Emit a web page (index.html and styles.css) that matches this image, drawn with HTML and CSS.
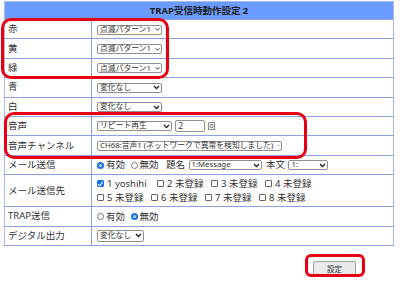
FILE: index.html
```html
<!DOCTYPE html>
<html lang="ja">
<head>
    <meta charset="UTF-8">
    <meta name="viewport" content="width=device-width, initial-scale=1.0">
    <title>TRAP受信時動作設定</title>
    <link rel="stylesheet" href="styles.css">
</head>
<body>
<div class="page">
    <table class="settings">
        <tr><th colspan="2">TRAP受信時動作設定 2</th></tr>
        <tr>
            <td class="label">赤</td>
            <td><span class="select w-65">点滅パターン1<svg width="7" height="5" viewBox="0 0 7 5"><path d="M1 1l2.5 2.5L6 1" /></svg></span></td>
        </tr>
        <tr>
            <td class="label">黄</td>
            <td><span class="select w-65">点滅パターン1<svg width="7" height="5" viewBox="0 0 7 5"><path d="M1 1l2.5 2.5L6 1" /></svg></span></td>
        </tr>
        <tr>
            <td class="label">緑</td>
            <td><span class="select w-65">点滅パターン1<svg width="7" height="5" viewBox="0 0 7 5"><path d="M1 1l2.5 2.5L6 1" /></svg></span></td>
        </tr>
        <tr>
            <td class="label">青</td>
            <td><span class="select w-65">変化なし<svg width="7" height="5" viewBox="0 0 7 5"><path d="M1 1l2.5 2.5L6 1" /></svg></span></td>
        </tr>
        <tr>
            <td class="label">白</td>
            <td><span class="select w-65">変化なし<svg width="7" height="5" viewBox="0 0 7 5"><path d="M1 1l2.5 2.5L6 1" /></svg></span></td>
        </tr>
        <tr>
            <td class="label">音声</td>
            <td>
                <span class="select w-75">リピート再生<svg width="7" height="5" viewBox="0 0 7 5"><path d="M1 1l2.5 2.5L6 1" /></svg></span>
                <span class="input">2</span><span class="unit">回</span>
            </td>
        </tr>
        <tr>
            <td class="label">音声チャンネル</td>
            <td><span class="select w-185">CH68:音声1 (ネットワークで異常を検知しました)<svg width="7" height="5" viewBox="0 0 7 5"><path d="M1 1l2.5 2.5L6 1" /></svg></span></td>
        </tr>
        <tr>
            <td class="label">メール送信</td>
            <td>
                <span class="opt"><span class="radio on"></span>有効</span>
                <span class="opt"><span class="radio"></span>無効</span>
                <span class="word">題名</span>
                <span class="select w-73">1:Message<svg width="7" height="5" viewBox="0 0 7 5"><path d="M1 1l2.5 2.5L6 1" /></svg></span>
                <span class="word">本文</span>
                <span class="select w-40">1:<svg width="7" height="5" viewBox="0 0 7 5"><path d="M1 1l2.5 2.5L6 1" /></svg></span>
            </td>
        </tr>
        <tr class="tall">
            <td class="label">メール送信先</td>
            <td>
                <div class="checks">
                    <span class="check-item first"><span class="check on"></span>1 yoshihi</span>
                    <span class="check-item"><span class="check"></span>2 未登録</span>
                    <span class="check-item"><span class="check"></span>3 未登録</span>
                    <span class="check-item"><span class="check"></span>4 未登録</span>
                </div>
                <div class="checks">
                    <span class="check-item"><span class="check"></span>5 未登録</span>
                    <span class="check-item"><span class="check"></span>6 未登録</span>
                    <span class="check-item"><span class="check"></span>7 未登録</span>
                    <span class="check-item"><span class="check"></span>8 未登録</span>
                </div>
            </td>
        </tr>
        <tr>
            <td class="label">TRAP送信</td>
            <td>
                <span class="opt"><span class="radio"></span>有効</span>
                <span class="opt"><span class="radio on"></span>無効</span>
            </td>
        </tr>
        <tr>
            <td class="label">デジタル出力</td>
            <td><span class="select">変化なし<svg width="7" height="5" viewBox="0 0 7 5"><path d="M1 1l2.5 2.5L6 1" /></svg></span></td>
        </tr>
    </table>
    <div class="actions">
        <button class="submit">設定</button>
    </div>
    <div class="mark mark-led"></div>
    <div class="mark mark-voice"></div>
    <div class="mark mark-submit"></div>
</div>
</body>
</html>
```

FILE: styles.css
```css
body {
    margin: 0;
    background-color: #ffffff;
    font-family: "Noto Sans", "Noto Sans CJK JP", sans-serif;
    color: #333333;
}
.page {
    position: relative;
    width: 400px;
    height: 282px;
    padding-top: 1px;
    box-sizing: border-box;
}
.settings {
    margin-left: 4px;
    width: 390px;
    border-collapse: collapse;
    border: 1px solid #a9b9ec;
    font-size: 9.5px;
}
.settings th {
    height: 17px;
    padding: 0;
    background-color: #6a9bff;
    color: #222222;
    font-weight: bold;
    font-size: 9.5px;
    line-height: 12px;
    border-bottom: 1px solid #8aa0e2;
}
.settings td {
    height: 18.4px;
    padding: 0 0 0 5px;
    border-top: 1px solid #8aa0e2;
    border-bottom: 1px solid #8aa0e2;
    line-height: 12px;
    white-space: nowrap;
}
.settings td.label {
    width: 83px;
    padding-left: 3px;
    border-right: 1px solid #8aa0e2;
}
.settings tr.tall td {
    height: 31px;
}
.select {
    display: inline-flex;
    align-items: center;
    justify-content: space-between;
    gap: 4px;
    height: 10px;
    padding: 0 1px 0 2px;
    border: 1px solid #8f8f8f;
    border-radius: 2px;
    background-color: #ffffff;
    font-size: 7.8px;
    line-height: 1;
    color: #333333;
    vertical-align: middle;
}
.select svg path {
    fill: none;
    stroke: #222222;
    stroke-width: 1.3;
}
.w-65 { width: 65px; box-sizing: border-box; }
.w-75 { width: 75px; box-sizing: border-box; }
.w-73 { width: 73px; box-sizing: border-box; }
.w-40 { width: 40px; box-sizing: border-box; }
.w-185 { width: 185px; box-sizing: border-box; }
.input {
    display: inline-flex;
    align-items: center;
    box-sizing: border-box;
    width: 30px;
    height: 12px;
    margin-left: 1px;
    padding-left: 2px;
    border: 1px solid #8f8f8f;
    border-radius: 2px;
    font-size: 8px;
    vertical-align: middle;
}
.unit {
    margin-left: 2px;
    font-size: 8px;
    vertical-align: middle;
}
.opt {
    display: inline-flex;
    align-items: center;
    margin-right: 3px;
    vertical-align: middle;
}
.word {
    margin: 0 1px 0 2px;
    vertical-align: middle;
}
.radio {
    display: inline-block;
    box-sizing: border-box;
    width: 7px;
    height: 7px;
    margin-right: 2px;
    border: 1px solid #777777;
    border-radius: 50%;
    background-color: #ffffff;
}
.radio.on {
    border: 2px solid #1a73e8;
    box-shadow: inset 0 0 0 1px #ffffff;
    background-color: #1a73e8;
}
.checks {
    display: flex;
    line-height: 14px;
}
.check-item {
    display: inline-flex;
    align-items: center;
    width: 54px;
}
.check-item.first {
    width: 60px;
}
.check {
    display: inline-block;
    box-sizing: border-box;
    width: 7px;
    height: 7px;
    margin-right: 3px;
    border: 1px solid #666666;
    border-radius: 1px;
    background-color: #ffffff;
}
.check.on {
    position: relative;
    border-color: #1a73e8;
    background-color: #1a73e8;
}
.check.on::after {
    content: "";
    position: absolute;
    left: 1px;
    top: -0.5px;
    width: 2px;
    height: 3.5px;
    border-right: 1.2px solid #ffffff;
    border-bottom: 1.2px solid #ffffff;
    transform: rotate(40deg);
}
.actions {
    display: flex;
    justify-content: flex-end;
    padding: 15px 44px 0 0;
}
.submit {
    width: 43px;
    height: 16px;
    padding: 0;
    border: 1px solid #a0a0a0;
    border-radius: 2px;
    background-color: #e9e9e9;
    font-family: "Noto Sans CJK JP", sans-serif;
    font-size: 7.5px;
    color: #333333;
}
.mark {
    position: absolute;
    box-sizing: border-box;
    border: 3px solid #e60012;
    border-radius: 10px;
}
.mark-led {
    left: 1px;
    top: 18px;
    width: 168px;
    height: 61px;
}
.mark-voice {
    left: 4px;
    top: 112px;
    width: 303px;
    height: 47px;
}
.mark-submit {
    left: 305px;
    top: 254px;
    width: 60px;
    height: 23px;
    border-radius: 6px;
}
```
